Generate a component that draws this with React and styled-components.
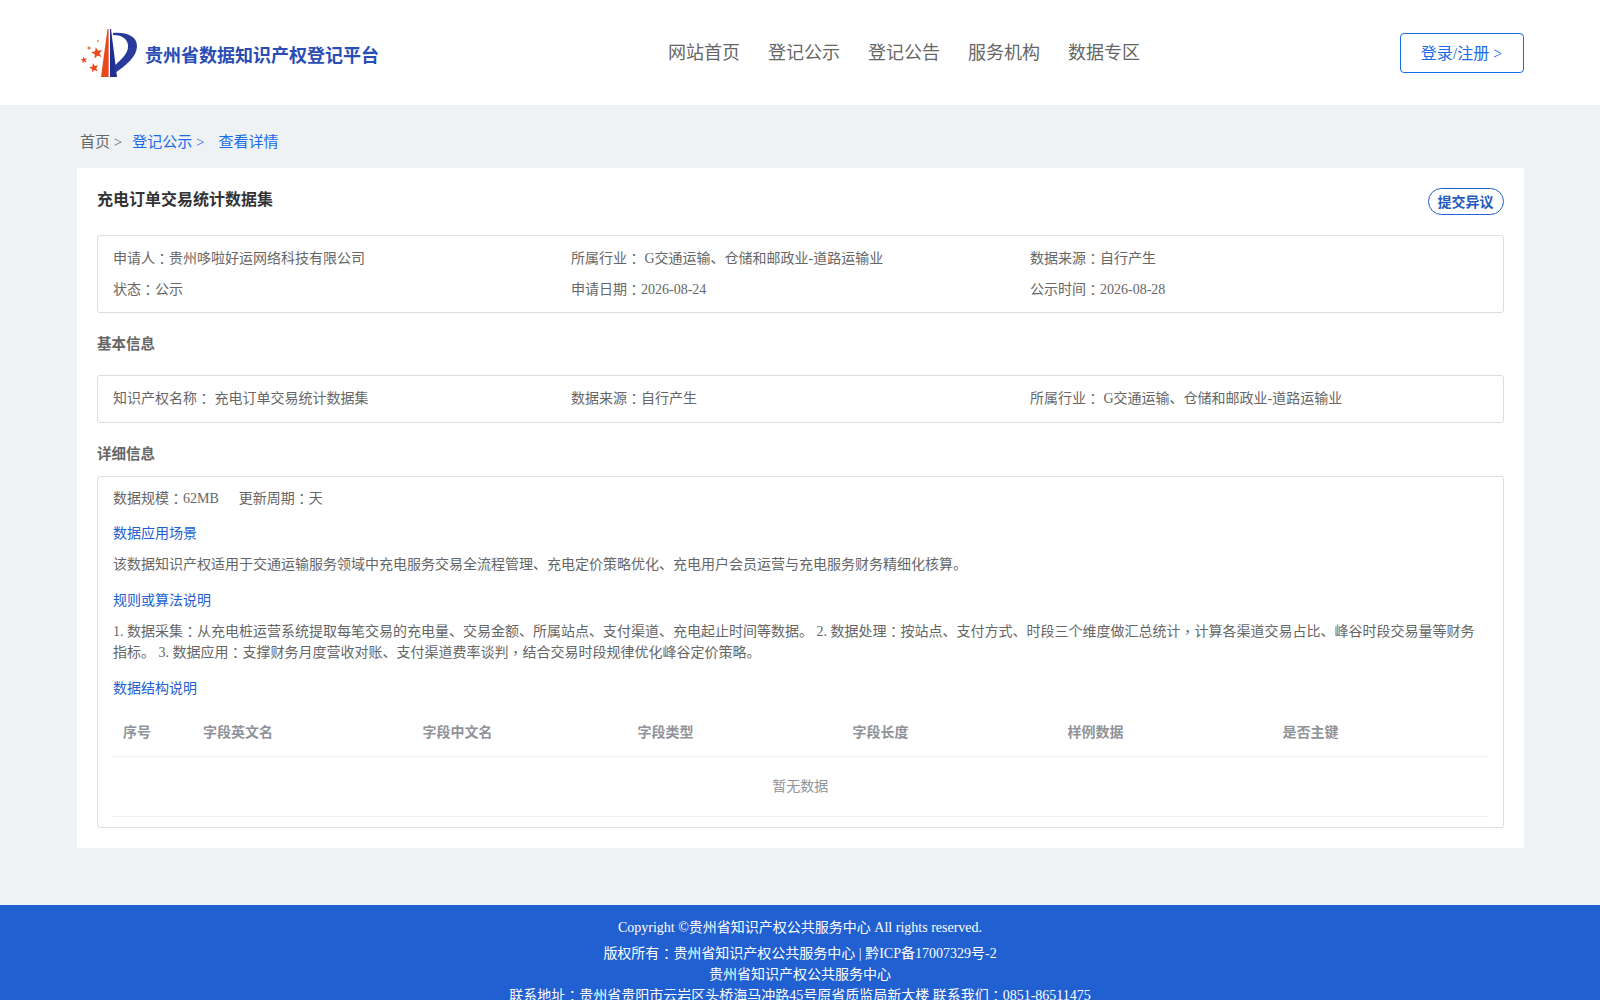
import styled, { createGlobalStyle } from 'styled-components';

const GlobalStyle = createGlobalStyle`
  html, body {
    margin: 0;
    padding: 0;
    background: #eff2f5;
    font-family: "Liberation Serif", "Noto Sans CJK SC", serif;
    color: #666;
  }
  * { box-sizing: border-box; }
`;

const Header = styled.header`
  height: 105px;
  background: #fff;
  padding: 0 76.4px 0 80px;
  display: flex;
  align-items: center;
`;

const Brand = styled.div`
  width: 588px;
  display: flex;
  align-items: center;
  gap: 7px;
  font-size: 18px;
  font-weight: bold;
  color: #2a4db5;
`;

const BrandName = styled.span`
  margin-top: 2px;
`;

const Nav = styled.nav`
  flex: 1;
  display: flex;
  gap: 28px;
  font-size: 18px;
  color: #666;
  margin-bottom: 4px;
`;

const LoginButton = styled.button`
  width: 124px;
  height: 40px;
  padding: 0 0 2px;
  background: #fff;
  border: 1px solid #1a6be8;
  border-radius: 4px;
  color: #1a6be8;
  font: inherit;
  font-size: 16px;
  margin-top: 1px;
`;

const Main = styled.main`
  padding: 0 76.4px 0 77px;
  margin-bottom: 57px;
`;

const Crumbs = styled.div`
  height: 63px;
  padding: 7px 0 0 3px;
  display: flex;
  align-items: center;
  font-size: 15px;
`;

const Crumb = styled.span`
  color: ${(p) => (p.$active ? '#1a6be8' : '#666')};
  margin-right: ${(p) => p.$gap}px;
`;

const Card = styled.section`
  background: #fff;
  padding: 20px 20px 20px;
`;

const TitleRow = styled.div`
  display: flex;
  justify-content: space-between;
  align-items: flex-start;
  height: 47px;
`;

const Title = styled.h1`
  margin: 0;
  font-size: 16px;
  line-height: 24px;
  font-weight: bold;
  color: #333;
`;

const ObjectionButton = styled.button`
  width: 76px;
  height: 27px;
  padding: 0 0 2px;
  background: #fff;
  border: 1px solid #2060d0;
  border-radius: 14px;
  color: #2459bd;
  font: inherit;
  font-size: 14px;
  font-weight: bold;
`;

const InfoBox = styled.div`
  border: 1px solid #ddd;
  border-radius: 3px;
  padding: ${(p) => p.$pad || '0 15px'};
`;

const InfoRow = styled.div`
  display: grid;
  grid-template-columns: 458px 459px 1fr;
  height: ${(p) => p.$height}px;
  align-items: center;
  font-size: 14px;
`;

const SectionHead = styled.h2`
  margin: 0;
  font-size: 14.5px;
  font-weight: bold;
  color: #666;
  height: ${(p) => p.$height}px;
  line-height: ${(p) => p.$line}px;
`;

const SizeLine = styled.div`
  display: flex;
  gap: 20px;
  font-size: 14px;
  line-height: 20px;
  padding-top: 12px;
`;

const BlueHead = styled.div`
  font-size: 14px;
  line-height: 20px;
  color: #2060d0;
  margin-top: 15px;
`;

const Paragraph = styled.p`
  margin: 10px 0 16px;
  font-size: 14px;
  line-height: 21px;
  color: #666;
`;

const Mark = styled.span`
  font-family: "Noto Sans CJK TC", sans-serif;
  line-height: 0;
  vertical-align: -1px;
`;

const TableHead = styled.div`
  display: grid;
  grid-template-columns: 80px 219.5px 215px 215px 215px 215px 1fr;
  height: 51px;
  margin-top: 7px;
  align-items: center;
  border-bottom: 1px solid #ebeef5;
  font-size: 14px;
  font-weight: bold;
  color: #909399;
`;

const HeadCell = styled.div`
  padding-left: 10px;
`;

const EmptyRow = styled.div`
  height: 60px;
  padding-bottom: 3px;
  display: flex;
  align-items: center;
  justify-content: center;
  border-bottom: 1px solid #ebeef5;
  font-size: 14px;
  color: #909399;
  margin-bottom: 10px;
`;

const Footer = styled.footer`
  background: #2060d0;
  color: #fff;
  text-align: center;
  font-size: 14px;
  padding-top: 12px;
  height: 130px;
`;

const FooterLine = styled.div`
  line-height: 21px;
  margin-top: ${(p) => p.$top || 0}px;
`;

// the site's font centres the full-width colon and comma
function Punct({ children }) {
  return children.split(/([：，])/).map((part, i) =>
    part === '：' || part === '，' ? <Mark key={i}>{part}</Mark> : part
  );
}

function Star({ x, y, r, turn = -12 }) {
  const points = [];
  for (let i = 0; i < 10; i++) {
    const radius = i % 2 === 0 ? r : r * 0.42;
    const angle = ((i * 36 + turn - 90) * Math.PI) / 180;
    points.push(`${x + radius * Math.cos(angle)},${y + radius * Math.sin(angle)}`);
  }
  return <polygon points={points.join(' ')} fill="#e8481c" />;
}

function Logo() {
  return (
    <svg width="58" height="52" viewBox="0 0 58 52">
      <path d="M27.5 2 L28.6 2 L28.6 50 L21 50 Z" fill="#e8481c" />
      <path d="M30 2 L31 2 L37 50 L30 50 Z" fill="#1f2f8f" />
      <path d="M33 6 C46 5 57 9 57 19 C57 30 45 39 35 46 L34 39 C41 33 49 26 48 18 C47 11 41 8 33 8 Z" fill="#2a3a9c" />
      <Star x={17} y={26} r={6} />
      <Star x={14} y={41} r={5} />
      <Star x={4} y={33} r={3.5} />
      <circle cx="9" cy="21" r="1.6" fill="#ee7744" />
      <circle cx="18" cy="14" r="0.9" fill="#ee7744" />
    </svg>
  );
}

const navItems = ['网站首页', '登记公示', '登记公告', '服务机构', '数据专区'];
const columns = ['序号', '字段英文名', '字段中文名', '字段类型', '字段长度', '样例数据', '是否主键'];

export default function App() {
  return (
    <>
      <GlobalStyle />
      <Header>
        <Brand>
          <Logo />
          <BrandName>贵州省数据知识产权登记平台</BrandName>
        </Brand>
        <Nav>
          {navItems.map((item) => (
            <span key={item}>{item}</span>
          ))}
        </Nav>
        <LoginButton>登录/注册 &gt;</LoginButton>
      </Header>
      <Main>
        <Crumbs>
          <Crumb $gap={10}>首页 &gt;</Crumb>
          <Crumb $active $gap={14}>登记公示 &gt;</Crumb>
          <Crumb $active>查看详情</Crumb>
        </Crumbs>
        <Card>
          <TitleRow>
            <Title>充电订单交易统计数据集</Title>
            <ObjectionButton>提交异议</ObjectionButton>
          </TitleRow>
          <InfoBox $pad="5px 15px 9px">
            <InfoRow $height={31}>
              <span><Punct>申请人：贵州哆啦好运网络科技有限公司</Punct></span>
              <span><Punct>所属行业： G交通运输、仓储和邮政业-道路运输业</Punct></span>
              <span><Punct>数据来源：自行产生</Punct></span>
            </InfoRow>
            <InfoRow $height={31}>
              <span><Punct>状态：公示</Punct></span>
              <span><Punct>申请日期：2026-08-24</Punct></span>
              <span><Punct>公示时间：2026-08-28</Punct></span>
            </InfoRow>
          </InfoBox>
          <SectionHead $height={62} $line={62}>基本信息</SectionHead>
          <InfoBox $pad="6px 15px 10px">
            <InfoRow $height={30}>
              <span><Punct>知识产权名称： 充电订单交易统计数据集</Punct></span>
              <span><Punct>数据来源：自行产生</Punct></span>
              <span><Punct>所属行业： G交通运输、仓储和邮政业-道路运输业</Punct></span>
            </InfoRow>
          </InfoBox>
          <SectionHead $height={53} $line={62}>详细信息</SectionHead>
          <InfoBox>
            <SizeLine>
              <span><Punct>数据规模：62MB</Punct></span>
              <span><Punct>更新周期：天</Punct></span>
            </SizeLine>
            <BlueHead>数据应用场景</BlueHead>
            <Paragraph>该数据知识产权适用于交通运输服务领域中充电服务交易全流程管理、充电定价策略优化、充电用户会员运营与充电服务财务精细化核算。</Paragraph>
            <BlueHead>规则或算法说明</BlueHead>
            <Paragraph>
              <Punct>1. 数据采集：从充电桩运营系统提取每笔交易的充电量、交易金额、所属站点、支付渠道、充电起止时间等数据。 2. 数据处理：按站点、支付方式、时段三个维度做汇总统计，计算各渠道交易占比、峰谷时段交易量等财务</Punct>
              <br />
              <Punct>指标。 3. 数据应用：支撑财务月度营收对账、支付渠道费率谈判，结合交易时段规律优化峰谷定价策略。</Punct>
            </Paragraph>
            <BlueHead>数据结构说明</BlueHead>
            <TableHead>
              {columns.map((col) => (
                <HeadCell key={col}>{col}</HeadCell>
              ))}
            </TableHead>
            <EmptyRow>暂无数据</EmptyRow>
          </InfoBox>
        </Card>
      </Main>
      <Footer>
        <FooterLine>Copyright ©贵州省知识产权公共服务中心 All rights reserved.</FooterLine>
        <FooterLine $top={5}><Punct>版权所有：贵州省知识产权公共服务中心 | 黔ICP备17007329号-2</Punct></FooterLine>
        <FooterLine>贵州省知识产权公共服务中心</FooterLine>
        <FooterLine><Punct>联系地址：贵州省贵阳市云岩区头桥海马冲路45号原省质监局新大楼 联系我们：0851-86511475</Punct></FooterLine>
      </Footer>
    </>
  );
}
